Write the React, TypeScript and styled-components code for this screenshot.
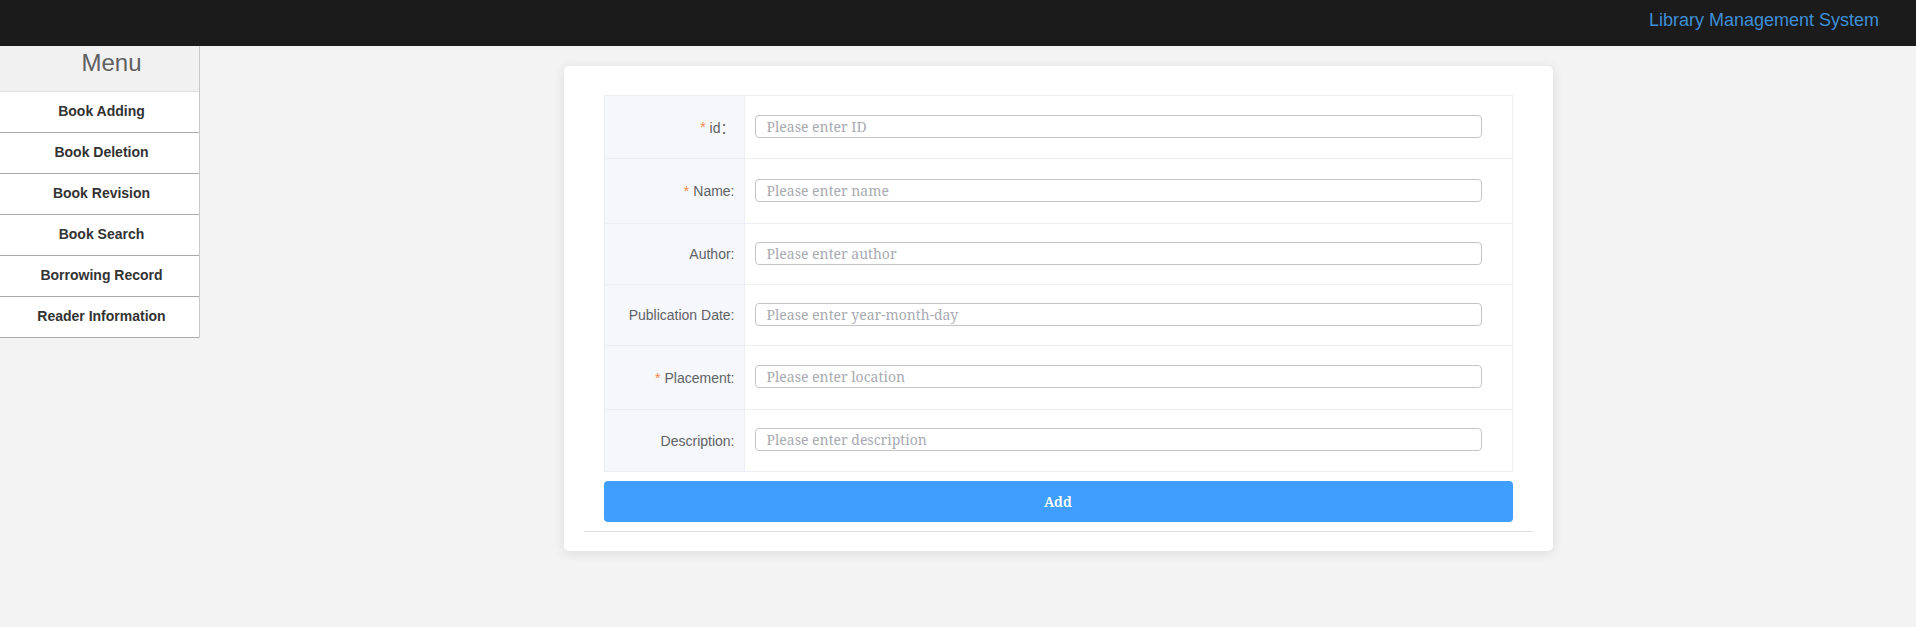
import styled, { createGlobalStyle } from 'styled-components'

const GlobalStyle = createGlobalStyle`
  html, body {
    margin: 0;
    padding: 0;
    background: #f3f3f3;
    font-family: "Liberation Sans", Arial, sans-serif;
  }
`

const menuItems = [
  'Book Adding',
  'Book Deletion',
  'Book Revision',
  'Book Search',
  'Borrowing Record',
  'Reader Information',
]

const fields = [
  { label: 'id：', placeholder: 'Please enter ID', required: true, height: 63 },
  { label: 'Name:', placeholder: 'Please enter name', required: true, height: 65 },
  { label: 'Author:', placeholder: 'Please enter author', required: false, height: 61 },
  { label: 'Publication Date:', placeholder: 'Please enter year-month-day', required: false, height: 61 },
  { label: 'Placement:', placeholder: 'Please enter location', required: true, height: 64 },
  { label: 'Description:', placeholder: 'Please enter description', required: false, height: 62 },
]

export default function App() {
  return (
    <>
      <GlobalStyle />
      <TopBar>
        <Brand>Library Management System</Brand>
      </TopBar>
      <Body>
        <Sidebar>
          <MenuTitle>Menu</MenuTitle>
          {menuItems.map((item) => (
            <MenuItem key={item}>{item}</MenuItem>
          ))}
        </Sidebar>
        <Main>
          <Card>
            <FormTable>
              {fields.map((f) => (
                <Row key={f.label} $height={f.height}>
                  <LabelCell>
                    {f.required && <Star>*</Star>}
                    {f.label}
                  </LabelCell>
                  <ValueCell>
                    <Input placeholder={f.placeholder} />
                  </ValueCell>
                </Row>
              ))}
            </FormTable>
            <AddButton>Add</AddButton>
            <Divider />
          </Card>
        </Main>
      </Body>
    </>
  )
}

const TopBar = styled.header`
  height: 46px;
  background: #1b1b1b;
  display: flex;
  align-items: center;
  justify-content: flex-end;
  padding-right: 37px;
`

const Brand = styled.span`
  color: #3d8fd6;
  font-size: 18px;
  margin-top: -5px;
`

const Body = styled.div`
  display: flex;
  align-items: flex-start;
  min-height: 581px;
`

const Sidebar = styled.nav`
  width: 200px;
  flex-shrink: 0;
  border-right: 1px solid #c8c8c8;
  box-sizing: border-box;
  background: #fff;
`

const MenuTitle = styled.div`
  height: 46px;
  box-sizing: border-box;
  background: #f1f1f1;
  border-bottom: 1px solid #dedede;
  display: flex;
  align-items: center;
  justify-content: center;
  padding: 0 0 11px 24px;
  font-size: 24px;
  color: #606060;
`

const MenuItem = styled.div`
  height: 37px;
  padding: 0 0 3px 4px;
  border-bottom: 1px solid #aaa;
  display: flex;
  align-items: center;
  justify-content: center;
  font-size: 14px;
  font-weight: bold;
  color: #333;
  background: #fff;
`

const Main = styled.main`
  flex: 1;
  display: flex;
  justify-content: center;
  padding-top: 20px;
`

const Card = styled.section`
  width: 989px;
  box-sizing: border-box;
  background: #fff;
  border-radius: 5px;
  box-shadow: 0 2px 12px rgba(0, 0, 0, 0.1);
  padding: 29px 20px 19px;
`

const FormTable = styled.div`
  margin: 0 20px;
  border: 1px solid #ebeef5;
  border-bottom: none;
`

const Row = styled.div<{ $height: number }>`
  display: flex;
  height: ${(p) => p.$height}px;
  box-sizing: border-box;
  border-bottom: 1px solid #ebeef5;
`

const LabelCell = styled.div`
  width: 140px;
  flex-shrink: 0;
  background: #f5f7fa;
  border-right: 1px solid #ebeef5;
  display: flex;
  align-items: center;
  justify-content: flex-end;
  padding-right: 9px;
  box-sizing: border-box;
  font-family: "Liberation Sans", Arial, "Noto Sans CJK SC", sans-serif;
  font-size: 14px;
  color: #606266;
`

const Star = styled.span`
  color: #f5894a;
  margin-right: 4px;
`

const ValueCell = styled.div`
  flex: 1;
  display: flex;
  align-items: center;
  padding: 0 30px 2px 10px;
`

const Input = styled.input`
  width: 100%;
  height: 23px;
  box-sizing: border-box;
  border: 1px solid #c4c4c4;
  border-radius: 4px;
  padding: 0 11px;
  font-family: "Noto Serif", "DejaVu Serif", serif;
  font-size: 14px;
  color: #333;
  outline: none;
  &::placeholder {
    color: #a8abb2;
  }
`

const AddButton = styled.button`
  display: block;
  width: calc(100% - 40px);
  margin: 9px 20px 0;
  height: 41px;
  border: none;
  border-radius: 4px;
  background: #409eff;
  color: #fff;
  font-family: "Noto Serif", "DejaVu Serif", serif;
  font-size: 14px;
  font-weight: 600;
`

const Divider = styled.hr`
  margin: 9px 0 0;
  border: none;
  border-top: 1px solid #e0e0e0;
`
